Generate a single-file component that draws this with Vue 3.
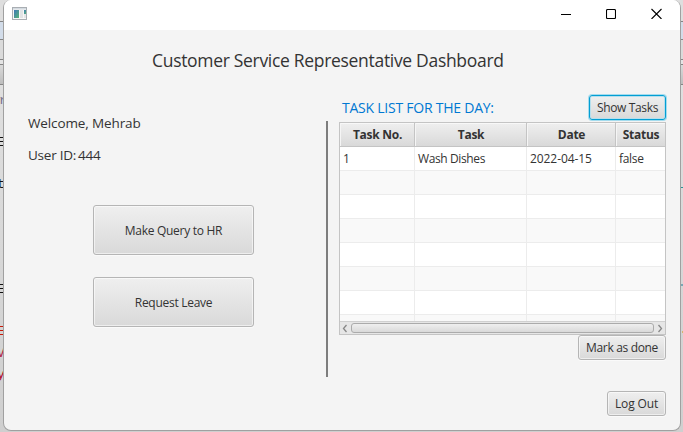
<script setup>
const columns = [
  { key: 'no', label: 'Task No.' },
  { key: 'task', label: 'Task' },
  { key: 'date', label: 'Date' },
  { key: 'status', label: 'Status' },
]
const rows = [
  { no: '1', task: 'Wash Dishes', date: '2022-04-15', status: 'false' },
  {}, {}, {}, {}, {}, {}, {},
]
const glyphs = [
  { ch: 'r', cls: 'g-r' },
  { ch: 'E', cls: 'g-e1' },
  { ch: 't', cls: 'g-t' },
  { ch: 'E', cls: 'g-e2' },
  { ch: 'E', cls: 'g-e3' },
  { ch: 'V', cls: 'g-v' },
  { ch: 'y', cls: 'g-y' },
]
</script>

<template>
  <div class="desktop">
    <div class="behind">
      <i class="b-top"></i><i class="b-tab"></i><i class="b-tool"></i><i class="b-gap"></i><i class="b-head"></i><i class="b-code"></i>
    </div>
    <span v-for="g in glyphs" :key="g.cls" class="glyph" :class="g.cls">{{ g.ch }}</span>
    <b class="mark m1"></b><b class="mark m2"></b><b class="mark m3"></b>
    <main class="window">
      <header class="titlebar">
        <svg class="app-icon" width="16" height="14" viewBox="0 0 16 14">
          <defs>
            <linearGradient id="pane" x1="0" y1="0" x2="1" y2="1">
              <stop offset="0" stop-color="#3f78b8" />
              <stop offset="1" stop-color="#55b477" />
            </linearGradient>
          </defs>
          <rect x=".5" y=".5" width="14" height="12" fill="#f7f7f7" stroke="#a9aeb3" />
          <rect x="1" y="1" width="13" height="1.5" fill="#d3dae0" />
          <rect x="2" y="3" width="5" height="8" fill="url(#pane)" />
          <rect x="8" y="3" width="3" height="8" fill="#e1e3e5" />
          <rect x="12" y="3" width="2" height="4" fill="url(#pane)" />
          <rect x="12" y="7" width="2" height="4" fill="#e4e6e7" />
        </svg>
        <div class="controls">
          <svg width="10" height="11" viewBox="0 0 10 11"><path d="M0 6.500h10" stroke="#000" /></svg>
          <svg width="10" height="11" viewBox="0 0 10 11"><rect x=".5" y="1.500" width="9" height="9" rx="1" fill="none" stroke="#000" stroke-width="1.1" /></svg>
          <svg width="11" height="11" viewBox="0 0 11 11"><path d="M.5 1l10 10M10.500 1l-10 10" stroke="#000" stroke-width="1.1" /></svg>
        </div>
      </header>
      <h1><span>Customer Service Representative Dashboard</span></h1>
      <div class="content">
        <section class="profile">
          <p class="welcome">Welcome, Mehrab</p>
          <p class="user"><span>User ID:</span><span>444</span></p>
          <button class="big query">Make Query to HR</button>
          <button class="big leave">Request Leave</button>
        </section>
        <div class="divider"></div>
        <section class="tasks">
          <div class="tasks-head">
            <h2>TASK LIST FOR THE DAY:</h2>
            <button class="small show">Show Tasks</button>
          </div>
          <div class="table">
            <div class="row head">
              <div v-for="c in columns" :key="c.key" class="cell" :class="c.key"><span>{{ c.label }}</span></div>
            </div>
            <div class="rows">
              <div v-for="(r, i) in rows" :key="i" class="row">
                <div v-for="c in columns" :key="c.key" class="cell" :class="c.key"><span>{{ r[c.key] }}</span></div>
              </div>
            </div>
            <div class="scrollbar">
              <svg width="6" height="9" viewBox="0 0 6 9"><path d="M4.500 1L1.500 4.500l3 3.500" fill="none" stroke="#888" stroke-width="1.3" /></svg>
              <div class="thumb"></div>
              <svg width="6" height="9" viewBox="0 0 6 9"><path d="M1.500 1l3 3.500-3 3.500" fill="none" stroke="#888" stroke-width="1.3" /></svg>
            </div>
          </div>
          <button class="small done">Mark as done</button>
          <button class="small logout">Log Out</button>
        </section>
      </div>
    </main>
  </div>
</template>

<style>
body { margin: 0; overflow: hidden; }
</style>

<style scoped>
* { box-sizing: border-box; }
.desktop {
  position: relative;
  width: 683px;
  height: 432px;
  padding-left: 3px;
  overflow: hidden;
  background: #d0d0d0;
  font-family: "Open Sans", "Noto Sans", sans-serif;
  color: #333;
}
.behind { position: absolute; inset: 0; display: flex; flex-direction: column; }
.behind i { display: block; flex: none; border-bottom: 1px solid #858585; }
.b-top { height: 22px; background: #dedede; }
.b-tab { height: 18px; background: #d2dce9; }
.b-tool { height: 20px; background: #dadada; }
.b-gap { height: 5px; background: #e4e4e4; }
.b-head { height: 20px; background: linear-gradient(#dadada, #bdbdbd); }
.behind .b-code { flex: 1; border: 0; background: linear-gradient(#dfdfdf, #cfcfcf); }
.glyph {
  position: absolute;
  left: -3px;
  font: 13px/14px "Liberation Mono", monospace;
  color: #111;
}
.g-r { top: 94px; left: -1px; color: #77708c; }
.g-e1 { top: 136px; }
.g-t { top: 178px; left: -3px; }
.g-e2 { top: 283px; }
.g-e3 { top: 325px; color: #c81808; }
.g-v { top: 347px; color: #b22040; }
.g-y { top: 368px; color: #b00020; }
.mark { position: absolute; left: 681px; width: 2px; height: 1px; background: #2f8f95; }
.m1 { top: 187px; }
.m2 { top: 284px; height: 2px; background: #7aa6b4; }
.m3 { top: 331px; left: 682px; height: 2px; background: #d6b36a; }
.window {
  position: relative;
  width: 678px;
  height: 431px;
  border: 1px solid #a0a0a0;
  border-top: 0;
  border-radius: 8px;
  background: #f4f4f4;
  overflow: hidden;
}
.titlebar {
  display: flex;
  align-items: flex-start;
  justify-content: space-between;
  height: 30px;
  padding: 7px 18px 0 8px;
  background: #fff;
}
.controls { display: flex; gap: 35px; padding-top: 1px; }
svg { display: block; flex: none; }
h1 {
  display: flex;
  align-items: center;
  height: 60px;
  margin: 0;
  padding-left: 148px;
  font-size: 17.500px;
  font-weight: 400;
  letter-spacing: -.31px;
  white-space: nowrap;
}
.content { display: flex; height: 340px; }
.profile { display: flex; flex-direction: column; width: 322px; padding: 22px 0 0 24px; }
p { margin: 0; font-size: 13.500px; line-height: 22px; letter-spacing: -.12px; white-space: nowrap; }
.user { display: flex; gap: 2px; margin-top: 10px; }
.user span { letter-spacing: -.24px; }
button {
  flex: none;
  padding: 0;
  border: 1px solid #b5b5b5;
  border-radius: 3px;
  background: linear-gradient(#efefef, #d9d9d9);
  box-shadow: inset 0 0 0 1px rgba(255, 255, 255, .55), 0 1px 0 #fafafa;
  font-family: inherit;
  font-size: 12px;
  letter-spacing: -.34px;
  color: #333;
  white-space: nowrap;
}
.big { width: 161px; height: 50px; margin-left: 65px; letter-spacing: -.28px; }
.query { margin-top: 39px; }
.leave { margin-top: 22px; }
.divider { width: 2px; height: 256px; margin-top: 31px; background: #7d7d7d; }
.tasks { display: flex; flex-direction: column; width: 327px; margin-left: 11px; padding-top: 5px; }
.tasks-head { display: flex; align-items: center; justify-content: space-between; height: 25px; padding-left: 3px; }
h2 { margin: 0; font-size: 14px; font-weight: 400; letter-spacing: -.24px; color: #0078d2; white-space: nowrap; }
.small { height: 25px; align-self: flex-end; }
.show {
  width: 77px;
  border-color: #039ed3;
  box-shadow: 0 0 0 1px #a4dcee, inset 0 0 0 1px #b6dfed;
}
.done { width: 88px; }
.logout { width: 59px; margin-top: 31px; letter-spacing: -.15px; }
.table { flex: none; height: 213px; margin-top: 2px; border: 1px solid #c4c4c4; background: #fff; }
.row { display: grid; grid-template-columns: 75px 112px 89px 49px; height: 24px; border-bottom: 1px solid #ececec; }
.rows { height: 174px; overflow: hidden; }
.rows .row:nth-child(even) { background: #f9f9f9; }
.cell { display: flex; align-items: center; padding-left: 3px; border-right: 1px solid #ececec; font-size: 12px; white-space: nowrap; overflow: hidden; }
.rows .task { letter-spacing: -.38px; }
.rows .date { letter-spacing: -.08px; }
.rows .status { letter-spacing: -.3px; }
.cell:last-child { border-right: 0; }
.head { background: linear-gradient(#efefef, #d9d9d9); border-color: #c4c4c4; box-shadow: inset 0 1px #f8f8f8; }
.head .cell { justify-content: center; padding: 0 0 0 1px; border-color: #c4c4c4; box-shadow: inset 1px 0 #f5f5f5; font-weight: 700; letter-spacing: -.28px; }
.scrollbar { display: flex; align-items: center; justify-content: space-between; height: 13px; padding: 0 2px; border-top: 1px solid #d0d0d0; background: #e6e6e6; }
.thumb { width: 303px; height: 10px; border: 1px solid #ababab; border-radius: 3px; background: linear-gradient(#efefef, #d9d9d9); }
</style>
